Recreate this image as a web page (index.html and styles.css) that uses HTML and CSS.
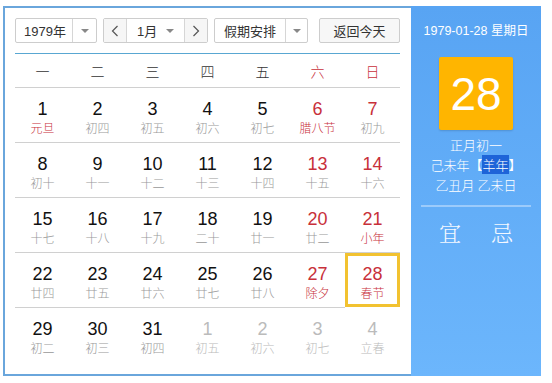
FILE: index.html
```html
<!DOCTYPE html>
<html lang="zh">
<head>
<meta charset="utf-8">
<link rel="stylesheet" href="styles.css">
</head>
<body>
<div class="frame">
  <div class="main">
    <div class="toolbar">
      <div class="sel year"><span class="val">1979年</span><span class="arr"><i class="caret"></i></span></div>
      <div class="month-group">
        <span class="nav"><svg width="8" height="12" viewBox="0 0 8 12"><path d="M6.5 1 L1.5 6 L6.5 11" fill="none" stroke="#555" stroke-width="1.2"/></svg></span>
        <span class="mval">1月<i class="caret"></i></span>
        <span class="nav"><svg width="8" height="12" viewBox="0 0 8 12"><path d="M1.5 1 L6.5 6 L1.5 11" fill="none" stroke="#555" stroke-width="1.2"/></svg></span>
      </div>
      <div class="sel holiday"><span class="val">假期安排</span><span class="arr"><i class="caret"></i></span></div>
      <div class="today-btn">返回今天</div>
    </div>
    <div class="week">
      <span>一</span><span>二</span><span>三</span><span>四</span><span>五</span><span class="red">六</span><span class="red">日</span>
    </div>
    <div class="days">
      <div class="cell"><b>1</b><em class="red">元旦</em></div>
      <div class="cell"><b>2</b><em>初四</em></div>
      <div class="cell"><b>3</b><em>初五</em></div>
      <div class="cell"><b>4</b><em>初六</em></div>
      <div class="cell"><b>5</b><em>初七</em></div>
      <div class="cell"><b class="red">6</b><em class="red">腊八节</em></div>
      <div class="cell"><b class="red">7</b><em>初九</em></div>

      <div class="cell"><b>8</b><em>初十</em></div>
      <div class="cell"><b>9</b><em>十一</em></div>
      <div class="cell"><b>10</b><em>十二</em></div>
      <div class="cell"><b>11</b><em>十三</em></div>
      <div class="cell"><b>12</b><em>十四</em></div>
      <div class="cell"><b class="red">13</b><em>十五</em></div>
      <div class="cell"><b class="red">14</b><em>十六</em></div>

      <div class="cell"><b>15</b><em>十七</em></div>
      <div class="cell"><b>16</b><em>十八</em></div>
      <div class="cell"><b>17</b><em>十九</em></div>
      <div class="cell"><b>18</b><em>二十</em></div>
      <div class="cell"><b>19</b><em>廿一</em></div>
      <div class="cell"><b class="red">20</b><em>廿二</em></div>
      <div class="cell"><b class="red">21</b><em class="red">小年</em></div>

      <div class="cell"><b>22</b><em>廿四</em></div>
      <div class="cell"><b>23</b><em>廿五</em></div>
      <div class="cell"><b>24</b><em>廿六</em></div>
      <div class="cell"><b>25</b><em>廿七</em></div>
      <div class="cell"><b>26</b><em>廿八</em></div>
      <div class="cell"><b class="red">27</b><em class="red">除夕</em></div>
      <div class="cell selected"><b class="red">28</b><em class="red">春节</em></div>

      <div class="cell last"><b>29</b><em>初二</em></div>
      <div class="cell last"><b>30</b><em>初三</em></div>
      <div class="cell last"><b>31</b><em>初四</em></div>
      <div class="cell last other"><b>1</b><em>初五</em></div>
      <div class="cell last other"><b>2</b><em>初六</em></div>
      <div class="cell last other"><b>3</b><em>初七</em></div>
      <div class="cell last other"><b>4</b><em>立春</em></div>
    </div>
  </div>
  <div class="side">
    <div class="date">1979-01-28 星期日</div>
    <div class="bigday">28</div>
    <div class="lunar">正月初一</div>
    <div class="lunar">己未年【<span class="hl">羊年</span>】</div>
    <div class="lunar">乙丑月 乙未日</div>
    <div class="divider"></div>
    <div class="yiji"><span>宜</span><span>忌</span></div>
  </div>
</div>
</body>
</html>
```

FILE: styles.css
```css
* { box-sizing: border-box; }
body {
  margin: 0;
  background: #fff;
  font-family: "Liberation Sans", Arial, "Noto Sans CJK SC", sans-serif;
  color: #333;
}
.frame {
  display: flex;
  margin: 6px 0 0 3px;
  width: 538px;
  height: 370px;
}
.main {
  width: 408px;
  border: 2px solid #6aa6dc;
  border-right: none;
  padding: 10px 11px 0 10px;
  background: #fff;
}
.toolbar {
  display: flex;
  height: 25px;
  gap: 6px;
  align-items: stretch;
}
.sel {
  display: flex;
  border: 1px solid #cdcdcd;
  border-radius: 2px;
  background: #fff;
  font-size: 13px;
  color: #333;
}
.sel .val {
  display: flex;
  align-items: center;
  justify-content: center;
  flex: 1;
}
.sel .arr {
  width: 24px;
  border-left: 1px solid #d6d6d6;
  display: flex;
  align-items: center;
  justify-content: center;
}
.caret {
  display: inline-block;
  width: 0;
  height: 0;
  border-left: 4px solid transparent;
  border-right: 4px solid transparent;
  border-top: 4px solid #888;
}
.year { width: 82px; }
.year .val { padding-left: 2px; }
.month-group {
  display: flex;
  width: 105px;
  border: 1px solid #cdcdcd;
  border-radius: 2px;
  font-size: 13px;
}
.nav {
  width: 22px;
  background: #f6f6f6;
  display: flex;
  align-items: center;
  justify-content: center;
}
.mval {
  flex: 1;
  border-left: 1px solid #d6d6d6;
  border-right: 1px solid #d6d6d6;
  display: flex;
  align-items: center;
  justify-content: space-between;
  padding: 0 10px 0 10px;
}
.holiday { width: 94px; }
.holiday .arr { width: 22px; }
.today-btn {
  margin-left: 5px;
  width: 81px;
  border: 1px solid #cdcdcd;
  border-radius: 2px;
  background: #f7f7f7;
  font-size: 13px;
  display: flex;
  align-items: center;
  justify-content: center;
}
.week {
  margin-top: 10px;
  border-top: 1px solid #59a7d2;
  border-bottom: 1px solid #d0d0d0;
  display: grid;
  grid-template-columns: repeat(7, 55px);
  height: 35px;
  align-items: center;
  font-size: 14px;
  font-family: "Noto Sans CJK SC", sans-serif;
  font-weight: 300;
  color: #333;
}
.week span { text-align: center; }
.red { color: #c8303a !important; }
.days {
  display: grid;
  grid-template-columns: repeat(7, 55px);
  grid-auto-rows: 55px;
}
.cell {
  border-bottom: 1px solid #d0d0d0;
  display: flex;
  flex-direction: column;
  align-items: center;
  padding-top: 11px;
}
.cell.last { border-bottom: none; }
.cell b {
  font-weight: normal;
  font-size: 18px;
  line-height: 20px;
  color: #111;
}
.cell em {
  font-style: normal;
  font-size: 12px;
  line-height: 16px;
  margin-top: 1px;
  color: #999;
  font-family: "Noto Sans CJK SC", sans-serif;
  font-weight: 300;
}
.cell.other b, .cell.other em { color: #bbb; }
.cell.selected {
  border: 3px solid #f2c230;
  padding-top: 8px;
  margin-bottom: 1px;
}
.side {
  width: 130px;
  background: linear-gradient(#58a4f3, #6cb6fc);
  display: flex;
  flex-direction: column;
  align-items: center;
  color: #fff;
}
.date {
  margin-top: 17px;
  font-size: 12.5px;
  line-height: 16px;
  font-family: "Liberation Sans", "Noto Sans CJK SC", sans-serif;
}
.bigday {
  margin-top: 18px;
  width: 74px;
  height: 73px;
  background: #ffb500;
  border-radius: 2px;
  box-shadow: 0 1px 2px rgba(0,0,0,0.15);
  display: flex;
  align-items: center;
  justify-content: center;
  font-size: 46px;
  color: #fff;
}
.lunar {
  font-size: 13px;
  line-height: 20px;
  font-family: "Noto Sans CJK SC", sans-serif;
  font-weight: 300;
}
.bigday + .lunar { margin-top: 5px; }
.hl { background: #1e64d8; color: #fff; }
.divider {
  margin-top: 10px;
  width: 110px;
  height: 2px;
  background: #9ccbfb;
}
.yiji {
  margin-top: 9px;
  display: flex;
  gap: 30px;
  font-size: 22px;
  font-family: "Noto Serif CJK SC", "Noto Sans CJK SC", serif;
  font-weight: 300;
  color: #f4f8ff;
}
```
